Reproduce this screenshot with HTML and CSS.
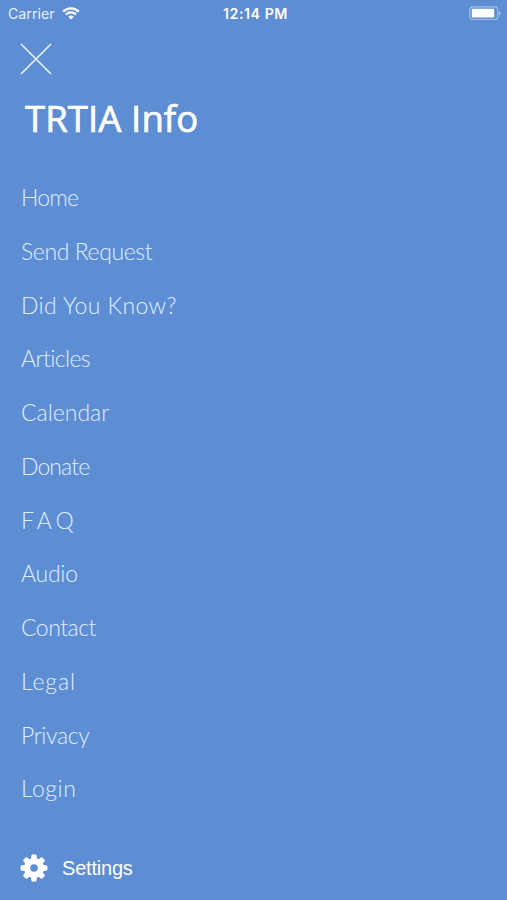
FILE: index.html
```html
<!DOCTYPE html>
<html lang="en">
<head>
<meta charset="utf-8">
<meta name="viewport" content="width=device-width">
<title>TRTIA Info</title>
<link rel="stylesheet" href="styles.css">
</head>
<body>
<header class="status">
  <div class="carrier"><span>Carrier</span>
    <svg class="wifi" width="18" height="13" viewBox="0 0 18 13" fill="none" stroke="#fff" stroke-width="2.2"><path d="M1.2 4.6a11 11 0 0 1 15.6 0M4 7.5a7 7 0 0 1 10 0"/><path d="M9 12.6 6.3 9.8a3.8 3.8 0 0 1 5.4 0z" fill="#fff" stroke="none"/></svg>
  </div>
  <time class="clock">12:14 PM</time>
  <svg class="battery" width="32" height="15" viewBox="0 0 32 15"><rect x=".8" y=".9" width="28" height="12.6" rx="3.2" fill="none" stroke="#a3c0ec" stroke-width="1.2"/><rect x="2.8" y="2.8" width="22.4" height="8.8" rx="1.2" fill="#fff"/><path d="M30 5v4.4q1.6-.6 1.6-2.2T30 5z" fill="#a3c0ec"/></svg>
</header>
<button class="close" aria-label="Close"><svg width="32" height="32" viewBox="0 0 32 32" stroke="#e9f3ff" stroke-width="1.6"><path d="M1 1l30 30M31 1 1 31"/></svg></button>
<h1 class="title">TRTIA Info</h1>
<nav class="menu">
  <a class="home">Home</a>
  <a class="request">Send Request</a>
  <a class="know">Did You Know?</a>
  <a class="articles">Articles</a>
  <a class="calendar">Calendar</a>
  <a class="donate">Donate</a>
  <a class="faq">FAQ</a>
  <a class="audio">Audio</a>
  <a class="contact">Contact</a>
  <a class="legal">Legal</a>
  <a class="privacy">Privacy</a>
  <a class="login">Login</a>
</nav>
<footer class="settings">
  <svg width="28" height="28" viewBox="-14 -14 28 28" fill="#fff"><path id="tooth" d="M-3.4-8-2.3-13.4h4.6L3.4-8v16L2.3 13.4h-4.6L-3.4 8z"/><use href="#tooth" transform="rotate(45)"/><use href="#tooth" transform="rotate(90)"/><use href="#tooth" transform="rotate(135)"/><circle r="9.8"/><circle r="3.8" fill="#5d8dd3"/></svg>
  <span>Settings</span>
</footer>
</body>
</html>
```

FILE: styles.css
```css
* { box-sizing: border-box; }
body {
  margin: 0;
  height: 900px;
  display: flex;
  flex-direction: column;
  overflow: hidden;
  background: #5d8dd3;
  color: #fff;
  font-family: Inter, "Liberation Sans", sans-serif;
}
.status {
  height: 28px;
  display: grid;
  grid-template-columns: 1fr auto 1fr;
  align-items: center;
  padding: 0 6px 0 8px;
  font-size: 14.2px;
}
.carrier { display: flex; align-items: center; gap: 7px; color: #e6f0ff; margin-top: -1px; }
.wifi { margin-top: -1px; }
.clock { font-weight: 600; font-size: 14.2px; letter-spacing: .55px; margin: -2px 0 0 2px; }
.battery { justify-self: end; margin-top: -1px; }
.close {
  width: 32px;
  height: 32px;
  margin: 15px 0 0 20px;
  padding: 0;
  border: 0;
  background: none;
}
.close svg { display: block; }
.title {
  margin: 18px 0 0 25px;
  font: 500 36.5px/50px "Open Sans", sans-serif;
  -webkit-text-stroke: .7px #fff;
  letter-spacing: .1px;
  white-space: nowrap;
}
.menu {
  margin-top: 28px;
  display: grid;
  grid-auto-rows: 53.75px;
  padding-left: 21px;
}
.menu a {
  font: 300 23px/53.75px Lato, sans-serif;
  color: #e0eeff;
  white-space: nowrap;
}
.home { letter-spacing: -.8px; }
.request { letter-spacing: -.4px; }
.know { letter-spacing: .38px; }
.articles { letter-spacing: -.6px; }
.donate { letter-spacing: -.9px; }
.menu .faq { letter-spacing: 4px; }
.audio { letter-spacing: -.25px; }
.contact { letter-spacing: -.5px; }
.legal { letter-spacing: .9px; }
.privacy { letter-spacing: -.4px; }
.login { letter-spacing: .5px; }
.settings {
  display: flex;
  align-items: center;
  gap: 14px;
  margin: 38px 0 0 20px;
  font: 20px/28px "Liberation Sans", sans-serif;
  letter-spacing: -.2px;
}
```
